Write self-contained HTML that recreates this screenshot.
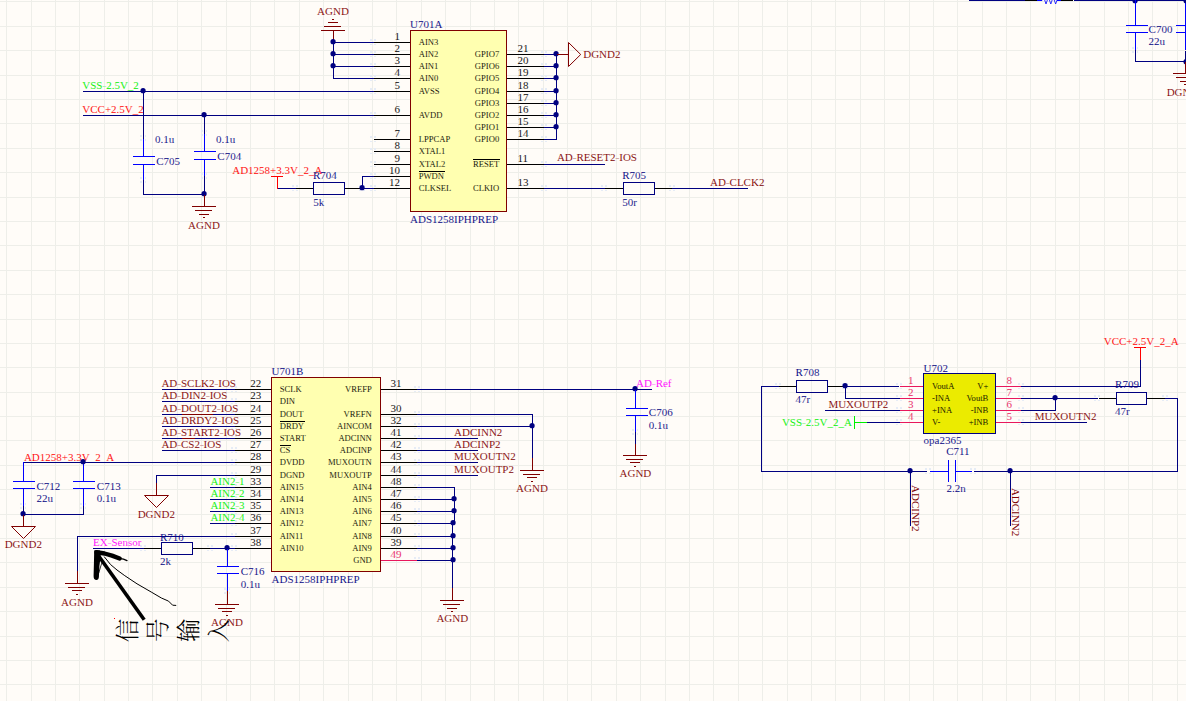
<!DOCTYPE html>
<html lang="zh"><head><meta charset="utf-8"><title>schematic</title>
<style>
html,body{margin:0;padding:0;background:#fff;overflow:hidden}
svg{display:block}
svg rect{shape-rendering:crispEdges}
svg text{font-family:"Liberation Serif","Noto Serif CJK SC",serif;white-space:pre}
</style></head><body>
<svg width="1186" height="708" viewBox="0 0 1186 708">
<rect x="0" y="0" width="1186" height="701" fill="#FFFCF8"/>
<g>
<rect x="6" y="0" width="1" height="701" fill="#EEEEE9"/>
<rect x="31" y="0" width="1" height="701" fill="#EEEEE9"/>
<rect x="55" y="0" width="1" height="701" fill="#EEEEE9"/>
<rect x="79" y="0" width="1" height="701" fill="#EEEEE9"/>
<rect x="104" y="0" width="1" height="701" fill="#EEEEE9"/>
<rect x="128" y="0" width="1" height="701" fill="#EEEEE9"/>
<rect x="152" y="0" width="1" height="701" fill="#EEEEE9"/>
<rect x="177" y="0" width="1" height="701" fill="#EEEEE9"/>
<rect x="201" y="0" width="1" height="701" fill="#EEEEE9"/>
<rect x="226" y="0" width="1" height="701" fill="#EEEEE9"/>
<rect x="250" y="0" width="1" height="701" fill="#EEEEE9"/>
<rect x="274" y="0" width="1" height="701" fill="#EEEEE9"/>
<rect x="299" y="0" width="1" height="701" fill="#EEEEE9"/>
<rect x="323" y="0" width="1" height="701" fill="#EEEEE9"/>
<rect x="348" y="0" width="1" height="701" fill="#EEEEE9"/>
<rect x="372" y="0" width="1" height="701" fill="#EEEEE9"/>
<rect x="396" y="0" width="1" height="701" fill="#EEEEE9"/>
<rect x="421" y="0" width="1" height="701" fill="#EEEEE9"/>
<rect x="445" y="0" width="1" height="701" fill="#EEEEE9"/>
<rect x="470" y="0" width="1" height="701" fill="#EEEEE9"/>
<rect x="494" y="0" width="1" height="701" fill="#EEEEE9"/>
<rect x="518" y="0" width="1" height="701" fill="#EEEEE9"/>
<rect x="543" y="0" width="1" height="701" fill="#EEEEE9"/>
<rect x="567" y="0" width="1" height="701" fill="#EEEEE9"/>
<rect x="591" y="0" width="1" height="701" fill="#EEEEE9"/>
<rect x="616" y="0" width="1" height="701" fill="#EEEEE9"/>
<rect x="640" y="0" width="1" height="701" fill="#EEEEE9"/>
<rect x="665" y="0" width="1" height="701" fill="#EEEEE9"/>
<rect x="689" y="0" width="1" height="701" fill="#EEEEE9"/>
<rect x="713" y="0" width="1" height="701" fill="#EEEEE9"/>
<rect x="738" y="0" width="1" height="701" fill="#EEEEE9"/>
<rect x="762" y="0" width="1" height="701" fill="#EEEEE9"/>
<rect x="787" y="0" width="1" height="701" fill="#EEEEE9"/>
<rect x="811" y="0" width="1" height="701" fill="#EEEEE9"/>
<rect x="835" y="0" width="1" height="701" fill="#EEEEE9"/>
<rect x="860" y="0" width="1" height="701" fill="#EEEEE9"/>
<rect x="884" y="0" width="1" height="701" fill="#EEEEE9"/>
<rect x="909" y="0" width="1" height="701" fill="#EEEEE9"/>
<rect x="933" y="0" width="1" height="701" fill="#EEEEE9"/>
<rect x="957" y="0" width="1" height="701" fill="#EEEEE9"/>
<rect x="982" y="0" width="1" height="701" fill="#EEEEE9"/>
<rect x="1006" y="0" width="1" height="701" fill="#EEEEE9"/>
<rect x="1030" y="0" width="1" height="701" fill="#EEEEE9"/>
<rect x="1055" y="0" width="1" height="701" fill="#EEEEE9"/>
<rect x="1079" y="0" width="1" height="701" fill="#EEEEE9"/>
<rect x="1104" y="0" width="1" height="701" fill="#EEEEE9"/>
<rect x="1128" y="0" width="1" height="701" fill="#EEEEE9"/>
<rect x="1152" y="0" width="1" height="701" fill="#EEEEE9"/>
<rect x="1177" y="0" width="1" height="701" fill="#EEEEE9"/>
<rect x="0" y="1" width="1186" height="1" fill="#EEEEE9"/>
<rect x="0" y="26" width="1186" height="1" fill="#EEEEE9"/>
<rect x="0" y="50" width="1186" height="1" fill="#EEEEE9"/>
<rect x="0" y="75" width="1186" height="1" fill="#EEEEE9"/>
<rect x="0" y="99" width="1186" height="1" fill="#EEEEE9"/>
<rect x="0" y="123" width="1186" height="1" fill="#EEEEE9"/>
<rect x="0" y="148" width="1186" height="1" fill="#EEEEE9"/>
<rect x="0" y="172" width="1186" height="1" fill="#EEEEE9"/>
<rect x="0" y="197" width="1186" height="1" fill="#EEEEE9"/>
<rect x="0" y="221" width="1186" height="1" fill="#EEEEE9"/>
<rect x="0" y="245" width="1186" height="1" fill="#EEEEE9"/>
<rect x="0" y="270" width="1186" height="1" fill="#EEEEE9"/>
<rect x="0" y="294" width="1186" height="1" fill="#EEEEE9"/>
<rect x="0" y="319" width="1186" height="1" fill="#EEEEE9"/>
<rect x="0" y="343" width="1186" height="1" fill="#EEEEE9"/>
<rect x="0" y="367" width="1186" height="1" fill="#EEEEE9"/>
<rect x="0" y="392" width="1186" height="1" fill="#EEEEE9"/>
<rect x="0" y="416" width="1186" height="1" fill="#EEEEE9"/>
<rect x="0" y="440" width="1186" height="1" fill="#EEEEE9"/>
<rect x="0" y="465" width="1186" height="1" fill="#EEEEE9"/>
<rect x="0" y="489" width="1186" height="1" fill="#EEEEE9"/>
<rect x="0" y="514" width="1186" height="1" fill="#EEEEE9"/>
<rect x="0" y="538" width="1186" height="1" fill="#EEEEE9"/>
<rect x="0" y="562" width="1186" height="1" fill="#EEEEE9"/>
<rect x="0" y="587" width="1186" height="1" fill="#EEEEE9"/>
<rect x="0" y="611" width="1186" height="1" fill="#EEEEE9"/>
<rect x="0" y="636" width="1186" height="1" fill="#EEEEE9"/>
<rect x="0" y="660" width="1186" height="1" fill="#EEEEE9"/>
<rect x="0" y="684" width="1186" height="1" fill="#EEEEE9"/>
<rect x="410" y="30" width="97" height="182" fill="#FFFFB0"/>
<rect x="370" y="39" width="2" height="2" fill="#E6ECF6"/>
<rect x="370" y="44" width="2" height="1" fill="#E6ECF6"/>
<rect x="374" y="39" width="2" height="2" fill="#E6ECF6"/>
<rect x="374" y="44" width="2" height="1" fill="#E6ECF6"/>
<rect x="370" y="51" width="2" height="2" fill="#E6ECF6"/>
<rect x="370" y="56" width="2" height="1" fill="#E6ECF6"/>
<rect x="374" y="51" width="2" height="2" fill="#E6ECF6"/>
<rect x="374" y="56" width="2" height="1" fill="#E6ECF6"/>
<rect x="370" y="63" width="2" height="2" fill="#E6ECF6"/>
<rect x="370" y="68" width="2" height="1" fill="#E6ECF6"/>
<rect x="374" y="63" width="2" height="2" fill="#E6ECF6"/>
<rect x="374" y="68" width="2" height="1" fill="#E6ECF6"/>
<rect x="370" y="75" width="2" height="2" fill="#E6ECF6"/>
<rect x="370" y="80" width="2" height="1" fill="#E6ECF6"/>
<rect x="374" y="75" width="2" height="2" fill="#E6ECF6"/>
<rect x="374" y="80" width="2" height="1" fill="#E6ECF6"/>
<rect x="370" y="88" width="2" height="2" fill="#E6ECF6"/>
<rect x="370" y="93" width="2" height="1" fill="#E6ECF6"/>
<rect x="374" y="88" width="2" height="2" fill="#E6ECF6"/>
<rect x="374" y="93" width="2" height="1" fill="#E6ECF6"/>
<rect x="370" y="112" width="2" height="2" fill="#E6ECF6"/>
<rect x="370" y="117" width="2" height="1" fill="#E6ECF6"/>
<rect x="374" y="112" width="2" height="2" fill="#E6ECF6"/>
<rect x="374" y="117" width="2" height="1" fill="#E6ECF6"/>
<rect x="370" y="136" width="2" height="2" fill="#E6ECF6"/>
<rect x="370" y="141" width="2" height="1" fill="#E6ECF6"/>
<rect x="374" y="136" width="2" height="2" fill="#E6ECF6"/>
<rect x="374" y="141" width="2" height="1" fill="#E6ECF6"/>
<rect x="370" y="148" width="2" height="2" fill="#E6ECF6"/>
<rect x="370" y="153" width="2" height="1" fill="#E6ECF6"/>
<rect x="374" y="148" width="2" height="2" fill="#E6ECF6"/>
<rect x="374" y="153" width="2" height="1" fill="#E6ECF6"/>
<rect x="370" y="161" width="2" height="2" fill="#E6ECF6"/>
<rect x="370" y="166" width="2" height="1" fill="#E6ECF6"/>
<rect x="374" y="161" width="2" height="2" fill="#E6ECF6"/>
<rect x="374" y="166" width="2" height="1" fill="#E6ECF6"/>
<rect x="370" y="173" width="2" height="2" fill="#E6ECF6"/>
<rect x="370" y="178" width="2" height="1" fill="#E6ECF6"/>
<rect x="374" y="173" width="2" height="2" fill="#E6ECF6"/>
<rect x="374" y="178" width="2" height="1" fill="#E6ECF6"/>
<rect x="370" y="185" width="2" height="2" fill="#E6ECF6"/>
<rect x="370" y="190" width="2" height="1" fill="#E6ECF6"/>
<rect x="374" y="185" width="2" height="2" fill="#E6ECF6"/>
<rect x="374" y="190" width="2" height="1" fill="#E6ECF6"/>
<rect x="541" y="51" width="2" height="2" fill="#E6ECF6"/>
<rect x="541" y="56" width="2" height="1" fill="#E6ECF6"/>
<rect x="545" y="51" width="2" height="2" fill="#E6ECF6"/>
<rect x="545" y="56" width="2" height="1" fill="#E6ECF6"/>
<rect x="541" y="63" width="2" height="2" fill="#E6ECF6"/>
<rect x="541" y="68" width="2" height="1" fill="#E6ECF6"/>
<rect x="545" y="63" width="2" height="2" fill="#E6ECF6"/>
<rect x="545" y="68" width="2" height="1" fill="#E6ECF6"/>
<rect x="541" y="75" width="2" height="2" fill="#E6ECF6"/>
<rect x="541" y="80" width="2" height="1" fill="#E6ECF6"/>
<rect x="545" y="75" width="2" height="2" fill="#E6ECF6"/>
<rect x="545" y="80" width="2" height="1" fill="#E6ECF6"/>
<rect x="541" y="88" width="2" height="2" fill="#E6ECF6"/>
<rect x="541" y="93" width="2" height="1" fill="#E6ECF6"/>
<rect x="545" y="88" width="2" height="2" fill="#E6ECF6"/>
<rect x="545" y="93" width="2" height="1" fill="#E6ECF6"/>
<rect x="541" y="100" width="2" height="2" fill="#E6ECF6"/>
<rect x="541" y="105" width="2" height="1" fill="#E6ECF6"/>
<rect x="545" y="100" width="2" height="2" fill="#E6ECF6"/>
<rect x="545" y="105" width="2" height="1" fill="#E6ECF6"/>
<rect x="541" y="112" width="2" height="2" fill="#E6ECF6"/>
<rect x="541" y="117" width="2" height="1" fill="#E6ECF6"/>
<rect x="545" y="112" width="2" height="2" fill="#E6ECF6"/>
<rect x="545" y="117" width="2" height="1" fill="#E6ECF6"/>
<rect x="541" y="124" width="2" height="2" fill="#E6ECF6"/>
<rect x="541" y="129" width="2" height="1" fill="#E6ECF6"/>
<rect x="545" y="124" width="2" height="2" fill="#E6ECF6"/>
<rect x="545" y="129" width="2" height="1" fill="#E6ECF6"/>
<rect x="541" y="136" width="2" height="2" fill="#E6ECF6"/>
<rect x="541" y="141" width="2" height="1" fill="#E6ECF6"/>
<rect x="545" y="136" width="2" height="2" fill="#E6ECF6"/>
<rect x="545" y="141" width="2" height="1" fill="#E6ECF6"/>
<rect x="541" y="161" width="2" height="2" fill="#E6ECF6"/>
<rect x="541" y="166" width="2" height="1" fill="#E6ECF6"/>
<rect x="545" y="161" width="2" height="2" fill="#E6ECF6"/>
<rect x="545" y="166" width="2" height="1" fill="#E6ECF6"/>
<rect x="541" y="185" width="2" height="2" fill="#E6ECF6"/>
<rect x="541" y="190" width="2" height="1" fill="#E6ECF6"/>
<rect x="545" y="185" width="2" height="2" fill="#E6ECF6"/>
<rect x="545" y="190" width="2" height="1" fill="#E6ECF6"/>
<rect x="271" y="377" width="110" height="195" fill="#FFFFB0"/>
<rect x="231" y="386" width="2" height="2" fill="#E6ECF6"/>
<rect x="231" y="391" width="2" height="1" fill="#E6ECF6"/>
<rect x="235" y="386" width="2" height="2" fill="#E6ECF6"/>
<rect x="235" y="391" width="2" height="1" fill="#E6ECF6"/>
<rect x="231" y="398" width="2" height="2" fill="#E6ECF6"/>
<rect x="231" y="403" width="2" height="1" fill="#E6ECF6"/>
<rect x="235" y="398" width="2" height="2" fill="#E6ECF6"/>
<rect x="235" y="403" width="2" height="1" fill="#E6ECF6"/>
<rect x="231" y="411" width="2" height="2" fill="#E6ECF6"/>
<rect x="231" y="416" width="2" height="1" fill="#E6ECF6"/>
<rect x="235" y="411" width="2" height="2" fill="#E6ECF6"/>
<rect x="235" y="416" width="2" height="1" fill="#E6ECF6"/>
<rect x="231" y="423" width="2" height="2" fill="#E6ECF6"/>
<rect x="231" y="428" width="2" height="1" fill="#E6ECF6"/>
<rect x="235" y="423" width="2" height="2" fill="#E6ECF6"/>
<rect x="235" y="428" width="2" height="1" fill="#E6ECF6"/>
<rect x="231" y="435" width="2" height="2" fill="#E6ECF6"/>
<rect x="231" y="440" width="2" height="1" fill="#E6ECF6"/>
<rect x="235" y="435" width="2" height="2" fill="#E6ECF6"/>
<rect x="235" y="440" width="2" height="1" fill="#E6ECF6"/>
<rect x="231" y="447" width="2" height="2" fill="#E6ECF6"/>
<rect x="231" y="452" width="2" height="1" fill="#E6ECF6"/>
<rect x="235" y="447" width="2" height="2" fill="#E6ECF6"/>
<rect x="235" y="452" width="2" height="1" fill="#E6ECF6"/>
<rect x="231" y="459" width="2" height="2" fill="#E6ECF6"/>
<rect x="231" y="464" width="2" height="1" fill="#E6ECF6"/>
<rect x="235" y="459" width="2" height="2" fill="#E6ECF6"/>
<rect x="235" y="464" width="2" height="1" fill="#E6ECF6"/>
<rect x="231" y="472" width="2" height="2" fill="#E6ECF6"/>
<rect x="231" y="477" width="2" height="1" fill="#E6ECF6"/>
<rect x="235" y="472" width="2" height="2" fill="#E6ECF6"/>
<rect x="235" y="477" width="2" height="1" fill="#E6ECF6"/>
<rect x="231" y="484" width="2" height="2" fill="#E6ECF6"/>
<rect x="231" y="489" width="2" height="1" fill="#E6ECF6"/>
<rect x="235" y="484" width="2" height="2" fill="#E6ECF6"/>
<rect x="235" y="489" width="2" height="1" fill="#E6ECF6"/>
<rect x="231" y="496" width="2" height="2" fill="#E6ECF6"/>
<rect x="231" y="501" width="2" height="1" fill="#E6ECF6"/>
<rect x="235" y="496" width="2" height="2" fill="#E6ECF6"/>
<rect x="235" y="501" width="2" height="1" fill="#E6ECF6"/>
<rect x="231" y="508" width="2" height="2" fill="#E6ECF6"/>
<rect x="231" y="513" width="2" height="1" fill="#E6ECF6"/>
<rect x="235" y="508" width="2" height="2" fill="#E6ECF6"/>
<rect x="235" y="513" width="2" height="1" fill="#E6ECF6"/>
<rect x="231" y="520" width="2" height="2" fill="#E6ECF6"/>
<rect x="231" y="525" width="2" height="1" fill="#E6ECF6"/>
<rect x="235" y="520" width="2" height="2" fill="#E6ECF6"/>
<rect x="235" y="525" width="2" height="1" fill="#E6ECF6"/>
<rect x="231" y="533" width="2" height="2" fill="#E6ECF6"/>
<rect x="231" y="538" width="2" height="1" fill="#E6ECF6"/>
<rect x="235" y="533" width="2" height="2" fill="#E6ECF6"/>
<rect x="235" y="538" width="2" height="1" fill="#E6ECF6"/>
<rect x="231" y="545" width="2" height="2" fill="#E6ECF6"/>
<rect x="231" y="550" width="2" height="1" fill="#E6ECF6"/>
<rect x="235" y="545" width="2" height="2" fill="#E6ECF6"/>
<rect x="235" y="550" width="2" height="1" fill="#E6ECF6"/>
<rect x="414" y="386" width="2" height="2" fill="#E6ECF6"/>
<rect x="414" y="391" width="2" height="1" fill="#E6ECF6"/>
<rect x="418" y="386" width="2" height="2" fill="#E6ECF6"/>
<rect x="418" y="391" width="2" height="1" fill="#E6ECF6"/>
<rect x="414" y="411" width="2" height="2" fill="#E6ECF6"/>
<rect x="414" y="416" width="2" height="1" fill="#E6ECF6"/>
<rect x="418" y="411" width="2" height="2" fill="#E6ECF6"/>
<rect x="418" y="416" width="2" height="1" fill="#E6ECF6"/>
<rect x="414" y="423" width="2" height="2" fill="#E6ECF6"/>
<rect x="414" y="428" width="2" height="1" fill="#E6ECF6"/>
<rect x="418" y="423" width="2" height="2" fill="#E6ECF6"/>
<rect x="418" y="428" width="2" height="1" fill="#E6ECF6"/>
<rect x="414" y="435" width="2" height="2" fill="#E6ECF6"/>
<rect x="414" y="440" width="2" height="1" fill="#E6ECF6"/>
<rect x="418" y="435" width="2" height="2" fill="#E6ECF6"/>
<rect x="418" y="440" width="2" height="1" fill="#E6ECF6"/>
<rect x="414" y="447" width="2" height="2" fill="#E6ECF6"/>
<rect x="414" y="452" width="2" height="1" fill="#E6ECF6"/>
<rect x="418" y="447" width="2" height="2" fill="#E6ECF6"/>
<rect x="418" y="452" width="2" height="1" fill="#E6ECF6"/>
<rect x="414" y="459" width="2" height="2" fill="#E6ECF6"/>
<rect x="414" y="464" width="2" height="1" fill="#E6ECF6"/>
<rect x="418" y="459" width="2" height="2" fill="#E6ECF6"/>
<rect x="418" y="464" width="2" height="1" fill="#E6ECF6"/>
<rect x="414" y="472" width="2" height="2" fill="#E6ECF6"/>
<rect x="414" y="477" width="2" height="1" fill="#E6ECF6"/>
<rect x="418" y="472" width="2" height="2" fill="#E6ECF6"/>
<rect x="418" y="477" width="2" height="1" fill="#E6ECF6"/>
<rect x="414" y="484" width="2" height="2" fill="#E6ECF6"/>
<rect x="414" y="489" width="2" height="1" fill="#E6ECF6"/>
<rect x="418" y="484" width="2" height="2" fill="#E6ECF6"/>
<rect x="418" y="489" width="2" height="1" fill="#E6ECF6"/>
<rect x="414" y="496" width="2" height="2" fill="#E6ECF6"/>
<rect x="414" y="501" width="2" height="1" fill="#E6ECF6"/>
<rect x="418" y="496" width="2" height="2" fill="#E6ECF6"/>
<rect x="418" y="501" width="2" height="1" fill="#E6ECF6"/>
<rect x="414" y="508" width="2" height="2" fill="#E6ECF6"/>
<rect x="414" y="513" width="2" height="1" fill="#E6ECF6"/>
<rect x="418" y="508" width="2" height="2" fill="#E6ECF6"/>
<rect x="418" y="513" width="2" height="1" fill="#E6ECF6"/>
<rect x="414" y="520" width="2" height="2" fill="#E6ECF6"/>
<rect x="414" y="525" width="2" height="1" fill="#E6ECF6"/>
<rect x="418" y="520" width="2" height="2" fill="#E6ECF6"/>
<rect x="418" y="525" width="2" height="1" fill="#E6ECF6"/>
<rect x="414" y="533" width="2" height="2" fill="#E6ECF6"/>
<rect x="414" y="538" width="2" height="1" fill="#E6ECF6"/>
<rect x="418" y="533" width="2" height="2" fill="#E6ECF6"/>
<rect x="418" y="538" width="2" height="1" fill="#E6ECF6"/>
<rect x="414" y="545" width="2" height="2" fill="#E6ECF6"/>
<rect x="414" y="550" width="2" height="1" fill="#E6ECF6"/>
<rect x="418" y="545" width="2" height="2" fill="#E6ECF6"/>
<rect x="418" y="550" width="2" height="1" fill="#E6ECF6"/>
<rect x="414" y="557" width="2" height="2" fill="#E6ECF6"/>
<rect x="414" y="562" width="2" height="1" fill="#E6ECF6"/>
<rect x="418" y="557" width="2" height="2" fill="#E6ECF6"/>
<rect x="418" y="562" width="2" height="1" fill="#E6ECF6"/>
<rect x="896" y="383" width="2" height="2" fill="#E6ECF6"/>
<rect x="896" y="388" width="2" height="1" fill="#E6ECF6"/>
<rect x="900" y="383" width="2" height="2" fill="#E6ECF6"/>
<rect x="900" y="388" width="2" height="1" fill="#E6ECF6"/>
<rect x="1018" y="383" width="2" height="2" fill="#E6ECF6"/>
<rect x="1018" y="388" width="2" height="1" fill="#E6ECF6"/>
<rect x="1022" y="383" width="2" height="2" fill="#E6ECF6"/>
<rect x="1022" y="388" width="2" height="1" fill="#E6ECF6"/>
<rect x="896" y="395" width="2" height="2" fill="#E6ECF6"/>
<rect x="896" y="400" width="2" height="1" fill="#E6ECF6"/>
<rect x="900" y="395" width="2" height="2" fill="#E6ECF6"/>
<rect x="900" y="400" width="2" height="1" fill="#E6ECF6"/>
<rect x="1018" y="395" width="2" height="2" fill="#E6ECF6"/>
<rect x="1018" y="400" width="2" height="1" fill="#E6ECF6"/>
<rect x="1022" y="395" width="2" height="2" fill="#E6ECF6"/>
<rect x="1022" y="400" width="2" height="1" fill="#E6ECF6"/>
<rect x="896" y="407" width="2" height="2" fill="#E6ECF6"/>
<rect x="896" y="412" width="2" height="1" fill="#E6ECF6"/>
<rect x="900" y="407" width="2" height="2" fill="#E6ECF6"/>
<rect x="900" y="412" width="2" height="1" fill="#E6ECF6"/>
<rect x="1018" y="407" width="2" height="2" fill="#E6ECF6"/>
<rect x="1018" y="412" width="2" height="1" fill="#E6ECF6"/>
<rect x="1022" y="407" width="2" height="2" fill="#E6ECF6"/>
<rect x="1022" y="412" width="2" height="1" fill="#E6ECF6"/>
<rect x="896" y="419" width="2" height="2" fill="#E6ECF6"/>
<rect x="896" y="424" width="2" height="1" fill="#E6ECF6"/>
<rect x="900" y="419" width="2" height="2" fill="#E6ECF6"/>
<rect x="900" y="424" width="2" height="1" fill="#E6ECF6"/>
<rect x="1018" y="419" width="2" height="2" fill="#E6ECF6"/>
<rect x="1018" y="424" width="2" height="1" fill="#E6ECF6"/>
<rect x="1022" y="419" width="2" height="2" fill="#E6ECF6"/>
<rect x="1022" y="424" width="2" height="1" fill="#E6ECF6"/>
<rect x="923" y="373" width="73" height="61" fill="#EBEB00"/>
<rect x="292" y="185" width="2" height="2" fill="#E6ECF6"/>
<rect x="292" y="190" width="2" height="1" fill="#E6ECF6"/>
<rect x="296" y="185" width="2" height="2" fill="#E6ECF6"/>
<rect x="296" y="190" width="2" height="1" fill="#E6ECF6"/>
<rect x="359" y="185" width="2" height="2" fill="#E6ECF6"/>
<rect x="359" y="190" width="2" height="1" fill="#E6ECF6"/>
<rect x="363" y="185" width="2" height="2" fill="#E6ECF6"/>
<rect x="363" y="190" width="2" height="1" fill="#E6ECF6"/>
<rect x="601" y="185" width="2" height="2" fill="#E6ECF6"/>
<rect x="601" y="190" width="2" height="1" fill="#E6ECF6"/>
<rect x="605" y="185" width="2" height="2" fill="#E6ECF6"/>
<rect x="605" y="190" width="2" height="1" fill="#E6ECF6"/>
<rect x="669" y="185" width="2" height="2" fill="#E6ECF6"/>
<rect x="669" y="190" width="2" height="1" fill="#E6ECF6"/>
<rect x="673" y="185" width="2" height="2" fill="#E6ECF6"/>
<rect x="673" y="190" width="2" height="1" fill="#E6ECF6"/>
<rect x="140" y="545" width="2" height="2" fill="#E6ECF6"/>
<rect x="140" y="550" width="2" height="1" fill="#E6ECF6"/>
<rect x="144" y="545" width="2" height="2" fill="#E6ECF6"/>
<rect x="144" y="550" width="2" height="1" fill="#E6ECF6"/>
<rect x="207" y="545" width="2" height="2" fill="#E6ECF6"/>
<rect x="207" y="550" width="2" height="1" fill="#E6ECF6"/>
<rect x="211" y="545" width="2" height="2" fill="#E6ECF6"/>
<rect x="211" y="550" width="2" height="1" fill="#E6ECF6"/>
<rect x="775" y="383" width="2" height="2" fill="#E6ECF6"/>
<rect x="775" y="388" width="2" height="1" fill="#E6ECF6"/>
<rect x="779" y="383" width="2" height="2" fill="#E6ECF6"/>
<rect x="779" y="388" width="2" height="1" fill="#E6ECF6"/>
<rect x="842" y="383" width="2" height="2" fill="#E6ECF6"/>
<rect x="842" y="388" width="2" height="1" fill="#E6ECF6"/>
<rect x="846" y="383" width="2" height="2" fill="#E6ECF6"/>
<rect x="846" y="388" width="2" height="1" fill="#E6ECF6"/>
<rect x="1094" y="395" width="2" height="2" fill="#E6ECF6"/>
<rect x="1094" y="400" width="2" height="1" fill="#E6ECF6"/>
<rect x="1098" y="395" width="2" height="2" fill="#E6ECF6"/>
<rect x="1098" y="400" width="2" height="1" fill="#E6ECF6"/>
<rect x="1162" y="395" width="2" height="2" fill="#E6ECF6"/>
<rect x="1162" y="400" width="2" height="1" fill="#E6ECF6"/>
<rect x="1166" y="395" width="2" height="2" fill="#E6ECF6"/>
<rect x="1166" y="400" width="2" height="1" fill="#E6ECF6"/>
<rect x="925" y="468" width="2" height="2" fill="#E6ECF6"/>
<rect x="925" y="473" width="2" height="1" fill="#E6ECF6"/>
<rect x="929" y="468" width="2" height="2" fill="#E6ECF6"/>
<rect x="929" y="473" width="2" height="1" fill="#E6ECF6"/>
<rect x="970" y="468" width="2" height="2" fill="#E6ECF6"/>
<rect x="970" y="473" width="2" height="1" fill="#E6ECF6"/>
<rect x="974" y="468" width="2" height="2" fill="#E6ECF6"/>
<rect x="974" y="473" width="2" height="1" fill="#E6ECF6"/>
<rect x="140" y="135" width="2" height="2" fill="#E6ECF6"/>
<rect x="145" y="135" width="1" height="2" fill="#E6ECF6"/>
<rect x="140" y="139" width="2" height="2" fill="#E6ECF6"/>
<rect x="145" y="139" width="1" height="2" fill="#E6ECF6"/>
<rect x="140" y="177" width="2" height="2" fill="#E6ECF6"/>
<rect x="145" y="177" width="1" height="2" fill="#E6ECF6"/>
<rect x="140" y="181" width="2" height="2" fill="#E6ECF6"/>
<rect x="145" y="181" width="1" height="2" fill="#E6ECF6"/>
<rect x="201" y="130" width="2" height="2" fill="#E6ECF6"/>
<rect x="206" y="130" width="1" height="2" fill="#E6ECF6"/>
<rect x="201" y="134" width="2" height="2" fill="#E6ECF6"/>
<rect x="206" y="134" width="1" height="2" fill="#E6ECF6"/>
<rect x="201" y="173" width="2" height="2" fill="#E6ECF6"/>
<rect x="206" y="173" width="1" height="2" fill="#E6ECF6"/>
<rect x="201" y="177" width="2" height="2" fill="#E6ECF6"/>
<rect x="206" y="177" width="1" height="2" fill="#E6ECF6"/>
<rect x="20" y="503" width="2" height="2" fill="#E6ECF6"/>
<rect x="25" y="503" width="1" height="2" fill="#E6ECF6"/>
<rect x="20" y="507" width="2" height="2" fill="#E6ECF6"/>
<rect x="25" y="507" width="1" height="2" fill="#E6ECF6"/>
<rect x="80" y="503" width="2" height="2" fill="#E6ECF6"/>
<rect x="85" y="503" width="1" height="2" fill="#E6ECF6"/>
<rect x="80" y="507" width="2" height="2" fill="#E6ECF6"/>
<rect x="85" y="507" width="1" height="2" fill="#E6ECF6"/>
<rect x="224" y="588" width="2" height="2" fill="#E6ECF6"/>
<rect x="229" y="588" width="1" height="2" fill="#E6ECF6"/>
<rect x="224" y="592" width="2" height="2" fill="#E6ECF6"/>
<rect x="229" y="592" width="1" height="2" fill="#E6ECF6"/>
<rect x="632" y="429" width="2" height="2" fill="#E6ECF6"/>
<rect x="637" y="429" width="1" height="2" fill="#E6ECF6"/>
<rect x="632" y="433" width="2" height="2" fill="#E6ECF6"/>
<rect x="637" y="433" width="1" height="2" fill="#E6ECF6"/>
<rect x="1132" y="47" width="2" height="2" fill="#E6ECF6"/>
<rect x="1137" y="47" width="1" height="2" fill="#E6ECF6"/>
<rect x="1132" y="51" width="2" height="2" fill="#E6ECF6"/>
<rect x="1137" y="51" width="1" height="2" fill="#E6ECF6"/>
<text x="1148.6" y="33.4" font-size="11" fill="#000080" stroke="#FFFCF8" stroke-width="0.08">C700</text>
<text x="1148.6" y="45.3" font-size="11" fill="#000080" stroke="#FFFCF8" stroke-width="0.08">22u</text>
<text x="1185.3" y="95.6" font-size="11" fill="#800000" text-anchor="middle" stroke="#FFFCF8" stroke-width="0.08">DGND2</text>
<text x="410" y="27.6" font-size="11" fill="#000080" stroke="#FFFCF8" stroke-width="0.08">U701A</text>
<text x="410" y="223.0" font-size="11" fill="#000080" stroke="#FFFCF8" stroke-width="0.08">ADS1258IPHPREP</text>
<text x="400" y="40" font-size="11" fill="#000000" text-anchor="end" stroke="#FFFCF8" stroke-width="0.08">1</text>
<text x="418.7" y="45.3" font-size="8.6" fill="#000000" stroke="#FFFFB0" stroke-width="0.08">AIN3</text>
<text x="400" y="52" font-size="11" fill="#000000" text-anchor="end" stroke="#FFFCF8" stroke-width="0.08">2</text>
<text x="418.7" y="57.3" font-size="8.6" fill="#000000" stroke="#FFFFB0" stroke-width="0.08">AIN2</text>
<text x="400" y="64" font-size="11" fill="#000000" text-anchor="end" stroke="#FFFCF8" stroke-width="0.08">3</text>
<text x="418.7" y="69.3" font-size="8.6" fill="#000000" stroke="#FFFFB0" stroke-width="0.08">AIN1</text>
<text x="400" y="76" font-size="11" fill="#000000" text-anchor="end" stroke="#FFFCF8" stroke-width="0.08">4</text>
<text x="418.7" y="81.3" font-size="8.6" fill="#000000" stroke="#FFFFB0" stroke-width="0.08">AIN0</text>
<text x="400" y="89" font-size="11" fill="#000000" text-anchor="end" stroke="#FFFCF8" stroke-width="0.08">5</text>
<text x="418.7" y="94.3" font-size="8.6" fill="#000000" stroke="#FFFFB0" stroke-width="0.08">AVSS</text>
<text x="400" y="113" font-size="11" fill="#000000" text-anchor="end" stroke="#FFFCF8" stroke-width="0.08">6</text>
<text x="418.7" y="118.3" font-size="8.6" fill="#000000" stroke="#FFFFB0" stroke-width="0.08">AVDD</text>
<text x="400" y="137" font-size="11" fill="#000000" text-anchor="end" stroke="#FFFCF8" stroke-width="0.08">7</text>
<text x="418.7" y="142.3" font-size="8.6" fill="#000000" stroke="#FFFFB0" stroke-width="0.08">LPPCAP</text>
<text x="400" y="149" font-size="11" fill="#000000" text-anchor="end" stroke="#FFFCF8" stroke-width="0.08">8</text>
<text x="418.7" y="154.3" font-size="8.6" fill="#000000" stroke="#FFFFB0" stroke-width="0.08">XTAL1</text>
<text x="400" y="162" font-size="11" fill="#000000" text-anchor="end" stroke="#FFFCF8" stroke-width="0.08">9</text>
<text x="418.7" y="167.3" font-size="8.6" fill="#000000" stroke="#FFFFB0" stroke-width="0.08">XTAL2</text>
<text x="400" y="174" font-size="11" fill="#000000" text-anchor="end" stroke="#FFFCF8" stroke-width="0.08">10</text>
<text x="418.7" y="179.3" font-size="8.6" fill="#000000" stroke="#FFFFB0" stroke-width="0.08">PWDN</text>
<text x="400" y="186" font-size="11" fill="#000000" text-anchor="end" stroke="#FFFCF8" stroke-width="0.08">12</text>
<text x="418.7" y="191.3" font-size="8.6" fill="#000000" stroke="#FFFFB0" stroke-width="0.08">CLKSEL</text>
<text x="517.4" y="52" font-size="11" fill="#000000" stroke="#FFFCF8" stroke-width="0.08">21</text>
<text x="499.2" y="57.3" font-size="8.6" fill="#000000" text-anchor="end" stroke="#FFFFB0" stroke-width="0.08">GPIO7</text>
<text x="517.4" y="64" font-size="11" fill="#000000" stroke="#FFFCF8" stroke-width="0.08">20</text>
<text x="499.2" y="69.3" font-size="8.6" fill="#000000" text-anchor="end" stroke="#FFFFB0" stroke-width="0.08">GPIO6</text>
<text x="517.4" y="76" font-size="11" fill="#000000" stroke="#FFFCF8" stroke-width="0.08">19</text>
<text x="499.2" y="81.3" font-size="8.6" fill="#000000" text-anchor="end" stroke="#FFFFB0" stroke-width="0.08">GPIO5</text>
<text x="517.4" y="89" font-size="11" fill="#000000" stroke="#FFFCF8" stroke-width="0.08">18</text>
<text x="499.2" y="94.3" font-size="8.6" fill="#000000" text-anchor="end" stroke="#FFFFB0" stroke-width="0.08">GPIO4</text>
<text x="517.4" y="101" font-size="11" fill="#000000" stroke="#FFFCF8" stroke-width="0.08">17</text>
<text x="499.2" y="106.3" font-size="8.6" fill="#000000" text-anchor="end" stroke="#FFFFB0" stroke-width="0.08">GPIO3</text>
<text x="517.4" y="113" font-size="11" fill="#000000" stroke="#FFFCF8" stroke-width="0.08">16</text>
<text x="499.2" y="118.3" font-size="8.6" fill="#000000" text-anchor="end" stroke="#FFFFB0" stroke-width="0.08">GPIO2</text>
<text x="517.4" y="125" font-size="11" fill="#000000" stroke="#FFFCF8" stroke-width="0.08">15</text>
<text x="499.2" y="130.3" font-size="8.6" fill="#000000" text-anchor="end" stroke="#FFFFB0" stroke-width="0.08">GPIO1</text>
<text x="517.4" y="137" font-size="11" fill="#000000" stroke="#FFFCF8" stroke-width="0.08">14</text>
<text x="499.2" y="142.3" font-size="8.6" fill="#000000" text-anchor="end" stroke="#FFFFB0" stroke-width="0.08">GPIO0</text>
<text x="517.4" y="162" font-size="11" fill="#000000" stroke="#FFFCF8" stroke-width="0.08">11</text>
<text x="499.2" y="167.3" font-size="8.6" fill="#000000" text-anchor="end" stroke="#FFFFB0" stroke-width="0.08">RESET</text>
<text x="517.4" y="186" font-size="11" fill="#000000" stroke="#FFFCF8" stroke-width="0.08">13</text>
<text x="499.2" y="191.3" font-size="8.6" fill="#000000" text-anchor="end" stroke="#FFFFB0" stroke-width="0.08">CLKIO</text>
<text x="333" y="15.3" font-size="11" fill="#800000" text-anchor="middle" stroke="#FFFCF8" stroke-width="0.08">AGND</text>
<text x="82.3" y="88.6" font-size="11" fill="#00F000" stroke="#FFFCF8" stroke-width="0.08">VSS-2.5V_2</text>
<text x="82.3" y="112.9" font-size="11" fill="#FF0000" stroke="#FFFCF8" stroke-width="0.08">VCC+2.5V_2</text>
<text x="155.1" y="143.3" font-size="11" fill="#000080" stroke="#FFFCF8" stroke-width="0.08">0.1u</text>
<text x="156.2" y="165.1" font-size="11" fill="#000080" stroke="#FFFCF8" stroke-width="0.08">C705</text>
<text x="215.9" y="143.3" font-size="11" fill="#000080" stroke="#FFFCF8" stroke-width="0.08">0.1u</text>
<text x="217.3" y="160" font-size="11" fill="#000080" stroke="#FFFCF8" stroke-width="0.08">C704</text>
<text x="204" y="228.8" font-size="11" fill="#800000" text-anchor="middle" stroke="#FFFCF8" stroke-width="0.08">AGND</text>
<text x="232.2" y="173.9" font-size="11" fill="#FF0000" stroke="#FFFCF8" stroke-width="0.08">AD1258+3.3V_2_A</text>
<text x="312.9" y="178.8" font-size="11" fill="#000080" stroke="#FFFCF8" stroke-width="0.08">R704</text>
<text x="313.2" y="205.6" font-size="11" fill="#000080" stroke="#FFFCF8" stroke-width="0.08">5k</text>
<text x="583.2" y="57.9" font-size="11" fill="#800000" stroke="#FFFCF8" stroke-width="0.08">DGND2</text>
<text x="556.9" y="161.4" font-size="11" fill="#800000" stroke="#FFFCF8" stroke-width="0.08">AD-RESET2-IOS</text>
<text x="622.2" y="178.6" font-size="11" fill="#000080" stroke="#FFFCF8" stroke-width="0.08">R705</text>
<text x="622.2" y="205.6" font-size="11" fill="#000080" stroke="#FFFCF8" stroke-width="0.08">50r</text>
<text x="710" y="186" font-size="11" fill="#800000" stroke="#FFFCF8" stroke-width="0.08">AD-CLCK2</text>
<text x="271.6" y="374.8" font-size="11" fill="#000080" stroke="#FFFCF8" stroke-width="0.08">U701B</text>
<text x="271.6" y="582.7" font-size="11" fill="#000080" stroke="#FFFCF8" stroke-width="0.08">ADS1258IPHPREP</text>
<text x="261.2" y="387" font-size="11" fill="#000000" text-anchor="end" stroke="#FFFCF8" stroke-width="0.08">22</text>
<text x="279.7" y="392.3" font-size="8.6" fill="#000000" stroke="#FFFFB0" stroke-width="0.08">SCLK</text>
<text x="261.2" y="399" font-size="11" fill="#000000" text-anchor="end" stroke="#FFFCF8" stroke-width="0.08">23</text>
<text x="279.7" y="404.3" font-size="8.6" fill="#000000" stroke="#FFFFB0" stroke-width="0.08">DIN</text>
<text x="261.2" y="412" font-size="11" fill="#000000" text-anchor="end" stroke="#FFFCF8" stroke-width="0.08">24</text>
<text x="279.7" y="417.3" font-size="8.6" fill="#000000" stroke="#FFFFB0" stroke-width="0.08">DOUT</text>
<text x="261.2" y="424" font-size="11" fill="#000000" text-anchor="end" stroke="#FFFCF8" stroke-width="0.08">25</text>
<text x="279.7" y="429.3" font-size="8.6" fill="#000000" stroke="#FFFFB0" stroke-width="0.08">DRDY</text>
<text x="261.2" y="436" font-size="11" fill="#000000" text-anchor="end" stroke="#FFFCF8" stroke-width="0.08">26</text>
<text x="279.7" y="441.3" font-size="8.6" fill="#000000" stroke="#FFFFB0" stroke-width="0.08">START</text>
<text x="261.2" y="448" font-size="11" fill="#000000" text-anchor="end" stroke="#FFFCF8" stroke-width="0.08">27</text>
<text x="279.7" y="453.3" font-size="8.6" fill="#000000" stroke="#FFFFB0" stroke-width="0.08">CS</text>
<text x="261.2" y="460" font-size="11" fill="#000000" text-anchor="end" stroke="#FFFCF8" stroke-width="0.08">28</text>
<text x="279.7" y="465.3" font-size="8.6" fill="#000000" stroke="#FFFFB0" stroke-width="0.08">DVDD</text>
<text x="261.2" y="473" font-size="11" fill="#000000" text-anchor="end" stroke="#FFFCF8" stroke-width="0.08">29</text>
<text x="279.7" y="478.3" font-size="8.6" fill="#000000" stroke="#FFFFB0" stroke-width="0.08">DGND</text>
<text x="261.2" y="485" font-size="11" fill="#000000" text-anchor="end" stroke="#FFFCF8" stroke-width="0.08">33</text>
<text x="279.7" y="490.3" font-size="8.6" fill="#000000" stroke="#FFFFB0" stroke-width="0.08">AIN15</text>
<text x="261.2" y="497" font-size="11" fill="#000000" text-anchor="end" stroke="#FFFCF8" stroke-width="0.08">34</text>
<text x="279.7" y="502.3" font-size="8.6" fill="#000000" stroke="#FFFFB0" stroke-width="0.08">AIN14</text>
<text x="261.2" y="509" font-size="11" fill="#000000" text-anchor="end" stroke="#FFFCF8" stroke-width="0.08">35</text>
<text x="279.7" y="514.3" font-size="8.6" fill="#000000" stroke="#FFFFB0" stroke-width="0.08">AIN13</text>
<text x="261.2" y="521" font-size="11" fill="#000000" text-anchor="end" stroke="#FFFCF8" stroke-width="0.08">36</text>
<text x="279.7" y="526.3" font-size="8.6" fill="#000000" stroke="#FFFFB0" stroke-width="0.08">AIN12</text>
<text x="261.2" y="534" font-size="11" fill="#000000" text-anchor="end" stroke="#FFFCF8" stroke-width="0.08">37</text>
<text x="279.7" y="539.3" font-size="8.6" fill="#000000" stroke="#FFFFB0" stroke-width="0.08">AIN11</text>
<text x="261.2" y="546" font-size="11" fill="#000000" text-anchor="end" stroke="#FFFCF8" stroke-width="0.08">38</text>
<text x="279.7" y="551.3" font-size="8.6" fill="#000000" stroke="#FFFFB0" stroke-width="0.08">AIN10</text>
<text x="390.4" y="387" font-size="11" fill="#000000" stroke="#FFFCF8" stroke-width="0.08">31</text>
<text x="371.8" y="392.3" font-size="8.6" fill="#000000" text-anchor="end" stroke="#FFFFB0" stroke-width="0.08">VREFP</text>
<text x="390.4" y="412" font-size="11" fill="#000000" stroke="#FFFCF8" stroke-width="0.08">30</text>
<text x="371.8" y="417.3" font-size="8.6" fill="#000000" text-anchor="end" stroke="#FFFFB0" stroke-width="0.08">VREFN</text>
<text x="390.4" y="424" font-size="11" fill="#000000" stroke="#FFFCF8" stroke-width="0.08">32</text>
<text x="371.8" y="429.3" font-size="8.6" fill="#000000" text-anchor="end" stroke="#FFFFB0" stroke-width="0.08">AINCOM</text>
<text x="390.4" y="436" font-size="11" fill="#000000" stroke="#FFFCF8" stroke-width="0.08">41</text>
<text x="371.8" y="441.3" font-size="8.6" fill="#000000" text-anchor="end" stroke="#FFFFB0" stroke-width="0.08">ADCINN</text>
<text x="390.4" y="448" font-size="11" fill="#000000" stroke="#FFFCF8" stroke-width="0.08">42</text>
<text x="371.8" y="453.3" font-size="8.6" fill="#000000" text-anchor="end" stroke="#FFFFB0" stroke-width="0.08">ADCINP</text>
<text x="390.4" y="460" font-size="11" fill="#000000" stroke="#FFFCF8" stroke-width="0.08">43</text>
<text x="371.8" y="465.3" font-size="8.6" fill="#000000" text-anchor="end" stroke="#FFFFB0" stroke-width="0.08">MUXOUTN</text>
<text x="390.4" y="473" font-size="11" fill="#000000" stroke="#FFFCF8" stroke-width="0.08">44</text>
<text x="371.8" y="478.3" font-size="8.6" fill="#000000" text-anchor="end" stroke="#FFFFB0" stroke-width="0.08">MUXOUTP</text>
<text x="390.4" y="485" font-size="11" fill="#000000" stroke="#FFFCF8" stroke-width="0.08">48</text>
<text x="371.8" y="490.3" font-size="8.6" fill="#000000" text-anchor="end" stroke="#FFFFB0" stroke-width="0.08">AIN4</text>
<text x="390.4" y="497" font-size="11" fill="#000000" stroke="#FFFCF8" stroke-width="0.08">47</text>
<text x="371.8" y="502.3" font-size="8.6" fill="#000000" text-anchor="end" stroke="#FFFFB0" stroke-width="0.08">AIN5</text>
<text x="390.4" y="509" font-size="11" fill="#000000" stroke="#FFFCF8" stroke-width="0.08">46</text>
<text x="371.8" y="514.3" font-size="8.6" fill="#000000" text-anchor="end" stroke="#FFFFB0" stroke-width="0.08">AIN6</text>
<text x="390.4" y="521" font-size="11" fill="#000000" stroke="#FFFCF8" stroke-width="0.08">45</text>
<text x="371.8" y="526.3" font-size="8.6" fill="#000000" text-anchor="end" stroke="#FFFFB0" stroke-width="0.08">AIN7</text>
<text x="390.4" y="534" font-size="11" fill="#000000" stroke="#FFFCF8" stroke-width="0.08">40</text>
<text x="371.8" y="539.3" font-size="8.6" fill="#000000" text-anchor="end" stroke="#FFFFB0" stroke-width="0.08">AIN8</text>
<text x="390.4" y="546" font-size="11" fill="#000000" stroke="#FFFCF8" stroke-width="0.08">39</text>
<text x="371.8" y="551.3" font-size="8.6" fill="#000000" text-anchor="end" stroke="#FFFFB0" stroke-width="0.08">AIN9</text>
<text x="390.4" y="558" font-size="11" fill="#E8175D" stroke="#FFFCF8" stroke-width="0.08">49</text>
<text x="371.8" y="563.3" font-size="8.6" fill="#000000" text-anchor="end" stroke="#FFFFB0" stroke-width="0.08">GND</text>
<text x="161.4" y="387.2" font-size="11" fill="#800000" stroke="#FFFCF8" stroke-width="0.08">AD-SCLK2-IOS</text>
<text x="161.4" y="399.2" font-size="11" fill="#800000" stroke="#FFFCF8" stroke-width="0.08">AD-DIN2-IOS</text>
<text x="161.4" y="412.2" font-size="11" fill="#800000" stroke="#FFFCF8" stroke-width="0.08">AD-DOUT2-IOS</text>
<text x="161.4" y="424.2" font-size="11" fill="#800000" stroke="#FFFCF8" stroke-width="0.08">AD-DRDY2-IOS</text>
<text x="161.4" y="436.2" font-size="11" fill="#800000" stroke="#FFFCF8" stroke-width="0.08">AD-START2-IOS</text>
<text x="161.4" y="448.2" font-size="11" fill="#800000" stroke="#FFFCF8" stroke-width="0.08">AD-CS2-IOS</text>
<text x="210.4" y="484.8" font-size="11" fill="#00F000" stroke="#FFFCF8" stroke-width="0.08">AIN2-1</text>
<text x="210.4" y="496.8" font-size="11" fill="#00F000" stroke="#FFFCF8" stroke-width="0.08">AIN2-2</text>
<text x="210.4" y="508.8" font-size="11" fill="#00F000" stroke="#FFFCF8" stroke-width="0.08">AIN2-3</text>
<text x="210.4" y="520.8" font-size="11" fill="#00F000" stroke="#FFFCF8" stroke-width="0.08">AIN2-4</text>
<text x="93.1" y="545.9" font-size="11" fill="#FF00FF" stroke="#FFFCF8" stroke-width="0.08">EX-Sensor</text>
<text x="159.9" y="540.6" font-size="11" fill="#000080" stroke="#FFFCF8" stroke-width="0.08">R710</text>
<text x="160" y="564.9" font-size="11" fill="#000080" stroke="#FFFCF8" stroke-width="0.08">2k</text>
<text x="227" y="626" font-size="11" fill="#800000" text-anchor="middle" stroke="#FFFCF8" stroke-width="0.08">AGND</text>
<text x="240.7" y="574.9" font-size="11" fill="#000080" stroke="#FFFCF8" stroke-width="0.08">C716</text>
<text x="240.7" y="587.5" font-size="11" fill="#000080" stroke="#FFFCF8" stroke-width="0.08">0.1u</text>
<text x="77" y="605.7" font-size="11" fill="#800000" text-anchor="middle" stroke="#FFFCF8" stroke-width="0.08">AGND</text>
<text x="23.9" y="460.6" font-size="11" fill="#FF0000" stroke="#FFFCF8" stroke-width="0.08">AD1258+3.3V_2_A</text>
<text x="23.3" y="547.9" font-size="11" fill="#800000" text-anchor="middle" stroke="#FFFCF8" stroke-width="0.08">DGND2</text>
<text x="36.4" y="489.6" font-size="11" fill="#000080" stroke="#FFFCF8" stroke-width="0.08">C712</text>
<text x="36.4" y="501.7" font-size="11" fill="#000080" stroke="#FFFCF8" stroke-width="0.08">22u</text>
<text x="96.8" y="489.6" font-size="11" fill="#000080" stroke="#FFFCF8" stroke-width="0.08">C713</text>
<text x="96.8" y="501.7" font-size="11" fill="#000080" stroke="#FFFCF8" stroke-width="0.08">0.1u</text>
<text x="156.3" y="517.9" font-size="11" fill="#800000" text-anchor="middle" stroke="#FFFCF8" stroke-width="0.08">DGND2</text>
<text x="636.1" y="386.9" font-size="11" fill="#FF00FF" stroke="#FFFCF8" stroke-width="0.08">AD-Ref</text>
<text x="532" y="492" font-size="11" fill="#800000" text-anchor="middle" stroke="#FFFCF8" stroke-width="0.08">AGND</text>
<text x="454.1" y="435.7" font-size="11" fill="#800000" stroke="#FFFCF8" stroke-width="0.08">ADCINN2</text>
<text x="454.1" y="447.7" font-size="11" fill="#800000" stroke="#FFFCF8" stroke-width="0.08">ADCINP2</text>
<text x="454.1" y="459.7" font-size="11" fill="#800000" stroke="#FFFCF8" stroke-width="0.08">MUXOUTN2</text>
<text x="454.1" y="472.7" font-size="11" fill="#800000" stroke="#FFFCF8" stroke-width="0.08">MUXOUTP2</text>
<text x="452.3" y="622.3" font-size="11" fill="#800000" text-anchor="middle" stroke="#FFFCF8" stroke-width="0.08">AGND</text>
<text x="635.4" y="477.4" font-size="11" fill="#800000" text-anchor="middle" stroke="#FFFCF8" stroke-width="0.08">AGND</text>
<text x="648.8" y="416.3" font-size="11" fill="#000080" stroke="#FFFCF8" stroke-width="0.08">C706</text>
<text x="648.8" y="428.8" font-size="11" fill="#000080" stroke="#FFFCF8" stroke-width="0.08">0.1u</text>
<text x="828.4" y="407.7" font-size="11" fill="#800000" stroke="#FFFCF8" stroke-width="0.08">MUXOUTP2</text>
<text x="781.9" y="425.9" font-size="11" fill="#00F000" stroke="#FFFCF8" stroke-width="0.08">VSS-2.5V_2_A</text>
<text x="913.4" y="383.6" font-size="11" fill="#E8175D" text-anchor="end" stroke="#FFFCF8" stroke-width="0.08">1</text>
<text x="932.1" y="389.3" font-size="8.6" fill="#000000" stroke="#EBEB00" stroke-width="0.08">VoutA</text>
<text x="913.4" y="395.6" font-size="11" fill="#E8175D" text-anchor="end" stroke="#FFFCF8" stroke-width="0.08">2</text>
<text x="932.1" y="401.3" font-size="8.6" fill="#000000" stroke="#EBEB00" stroke-width="0.08">-INA</text>
<text x="913.4" y="407.6" font-size="11" fill="#E8175D" text-anchor="end" stroke="#FFFCF8" stroke-width="0.08">3</text>
<text x="932.1" y="413.3" font-size="8.6" fill="#000000" stroke="#EBEB00" stroke-width="0.08">+INA</text>
<text x="913.4" y="419.6" font-size="11" fill="#E8175D" text-anchor="end" stroke="#FFFCF8" stroke-width="0.08">4</text>
<text x="932.1" y="425.3" font-size="8.6" fill="#000000" stroke="#EBEB00" stroke-width="0.08">V-</text>
<text x="1006.4" y="383.6" font-size="11" fill="#E8175D" stroke="#FFFCF8" stroke-width="0.08">8</text>
<text x="988.3" y="389.3" font-size="8.6" fill="#000000" text-anchor="end" stroke="#EBEB00" stroke-width="0.08">V+</text>
<text x="1006.4" y="395.6" font-size="11" fill="#E8175D" stroke="#FFFCF8" stroke-width="0.08">7</text>
<text x="988.3" y="401.3" font-size="8.6" fill="#000000" text-anchor="end" stroke="#EBEB00" stroke-width="0.08">VoutB</text>
<text x="1006.4" y="407.6" font-size="11" fill="#E8175D" stroke="#FFFCF8" stroke-width="0.08">6</text>
<text x="988.3" y="413.3" font-size="8.6" fill="#000000" text-anchor="end" stroke="#EBEB00" stroke-width="0.08">-INB</text>
<text x="1006.4" y="419.6" font-size="11" fill="#E8175D" stroke="#FFFCF8" stroke-width="0.08">5</text>
<text x="988.3" y="425.3" font-size="8.6" fill="#000000" text-anchor="end" stroke="#EBEB00" stroke-width="0.08">+INB</text>
<text x="923.6" y="371.5" font-size="11" fill="#000080" stroke="#FFFCF8" stroke-width="0.08">U702</text>
<text x="923.6" y="444.1" font-size="11" fill="#000080" stroke="#FFFCF8" stroke-width="0.08">opa2365</text>
<text x="946.2" y="455.3" font-size="11" fill="#000080" stroke="#FFFCF8" stroke-width="0.08">C711</text>
<text x="946.6" y="491.7" font-size="11" fill="#000080" stroke="#FFFCF8" stroke-width="0.08">2.2n</text>
<text x="795.6" y="376.2" font-size="11" fill="#000080" stroke="#FFFCF8" stroke-width="0.08">R708</text>
<text x="795.6" y="403.1" font-size="11" fill="#000080" stroke="#FFFCF8" stroke-width="0.08">47r</text>
<text x="1103.7" y="344.6" font-size="11" fill="#FF0000" stroke="#FFFCF8" stroke-width="0.08">VCC+2.5V_2_A</text>
<text x="1034.7" y="420" font-size="11" fill="#800000" stroke="#FFFCF8" stroke-width="0.08">MUXOUTN2</text>
<text x="1115.1" y="388.4" font-size="11" fill="#000080" stroke="#FFFCF8" stroke-width="0.08">R709</text>
<text x="1115.1" y="415.3" font-size="11" fill="#000080" stroke="#FFFCF8" stroke-width="0.08">47r</text>
<text transform="translate(912.1,485.1) rotate(90)" font-size="11" fill="#800000">ADCINP2</text>
<text transform="translate(1012.1,487.9) rotate(90)" font-size="11" fill="#800000">ADCINN2</text>
<rect x="969" y="0" width="56" height="1" fill="#000080"/>
<rect x="1025" y="0" width="12" height="1" fill="#000000"/>
<rect x="1037" y="0" width="5" height="1" fill="#0000FF"/>
<polyline points="1042,0.5 1044,-2 1046,4 1048.4,-3 1050.8,4 1053.2,-3 1055.6,4 1057.5,-1 1058,0.5" fill="none" stroke="#0000FF" stroke-width="0.8"/>
<rect x="1057" y="0" width="4" height="1" fill="#0000FF"/>
<rect x="1061" y="0" width="12" height="1" fill="#000000"/>
<rect x="1074" y="0" width="112" height="1" fill="#000080"/>
<circle cx="1135.05" cy="0.65" r="2.6" fill="#000080"/>
<rect x="1135" y="0" width="1" height="25" fill="#0000FF"/>
<rect x="1126" y="25" width="22" height="1" fill="#0000FF"/>
<rect x="1126" y="32" width="22" height="1" fill="#0000FF"/>
<rect x="1135" y="32" width="1" height="18" fill="#0000FF"/>
<rect x="1135" y="50" width="1" height="11" fill="#000080"/>
<rect x="1185" y="0" width="1" height="50" fill="#0000FF"/>
<rect x="1185" y="51" width="1" height="10" fill="#000080"/>
<rect x="1176" y="25" width="10" height="1" fill="#0000FF"/>
<rect x="1176" y="32" width="10" height="1" fill="#0000FF"/>
<rect x="1135" y="61" width="51" height="1" fill="#000080"/>
<circle cx="1186.05" cy="0.65" r="2.6" fill="#000080"/>
<circle cx="1186.05" cy="61.65" r="2.6" fill="#000080"/>
<rect x="1185" y="62" width="1" height="11" fill="#800000"/>
<rect x="1173" y="73" width="24" height="1" fill="#800000"/>
<rect x="1176" y="77" width="17" height="1" fill="#800000"/>
<rect x="1180" y="81" width="10" height="1" fill="#800000"/>
<rect x="1184" y="84" width="2" height="1" fill="#800000"/>
<rect x="410.5" y="30.5" width="96" height="181" fill="none" stroke="#800000" stroke-width="1"/>
<rect x="374" y="42" width="36" height="1" fill="#000000"/>
<rect x="374" y="54" width="36" height="1" fill="#000000"/>
<rect x="374" y="66" width="36" height="1" fill="#000000"/>
<rect x="374" y="78" width="36" height="1" fill="#000000"/>
<rect x="374" y="91" width="36" height="1" fill="#000000"/>
<rect x="374" y="115" width="36" height="1" fill="#000000"/>
<rect x="374" y="139" width="36" height="1" fill="#000000"/>
<rect x="374" y="151" width="36" height="1" fill="#000000"/>
<rect x="374" y="164" width="36" height="1" fill="#000000"/>
<rect x="374" y="176" width="36" height="1" fill="#000000"/>
<rect x="374" y="188" width="36" height="1" fill="#000000"/>
<rect x="419" y="171" width="26" height="1" fill="#000000"/>
<rect x="507" y="54" width="37" height="1" fill="#000000"/>
<rect x="507" y="66" width="37" height="1" fill="#000000"/>
<rect x="507" y="78" width="37" height="1" fill="#000000"/>
<rect x="507" y="91" width="37" height="1" fill="#000000"/>
<rect x="507" y="103" width="37" height="1" fill="#000000"/>
<rect x="507" y="115" width="37" height="1" fill="#000000"/>
<rect x="507" y="127" width="37" height="1" fill="#000000"/>
<rect x="507" y="139" width="37" height="1" fill="#000000"/>
<rect x="507" y="164" width="37" height="1" fill="#000000"/>
<rect x="507" y="188" width="37" height="1" fill="#000000"/>
<rect x="473" y="159" width="27" height="1" fill="#000000"/>
<rect x="321" y="30" width="24" height="1" fill="#800000"/>
<rect x="324" y="26" width="17" height="1" fill="#800000"/>
<rect x="328" y="22" width="10" height="1" fill="#800000"/>
<rect x="332" y="19" width="2" height="1" fill="#800000"/>
<rect x="333" y="31" width="1" height="11" fill="#800000"/>
<rect x="333" y="42" width="1" height="37" fill="#000080"/>
<rect x="333" y="42" width="41" height="1" fill="#000080"/>
<rect x="333" y="54" width="41" height="1" fill="#000080"/>
<rect x="333" y="66" width="41" height="1" fill="#000080"/>
<rect x="333" y="78" width="41" height="1" fill="#000080"/>
<circle cx="333.05" cy="41.65" r="2.6" fill="#000080"/>
<circle cx="333.05" cy="53.65" r="2.6" fill="#000080"/>
<circle cx="333.05" cy="65.65" r="2.6" fill="#000080"/>
<rect x="83" y="91" width="291" height="1" fill="#000080"/>
<rect x="83" y="115" width="291" height="1" fill="#000080"/>
<rect x="143" y="91" width="1" height="48" fill="#000080"/>
<rect x="143" y="139" width="1" height="17" fill="#0000FF"/>
<rect x="133" y="156" width="22" height="1" fill="#0000FF"/>
<rect x="133" y="164" width="22" height="1" fill="#0000FF"/>
<rect x="143" y="164" width="1" height="16" fill="#0000FF"/>
<rect x="143" y="180" width="1" height="15" fill="#000080"/>
<circle cx="143.05" cy="90.65" r="2.6" fill="#000080"/>
<rect x="204" y="115" width="1" height="19" fill="#000080"/>
<rect x="204" y="134" width="1" height="17" fill="#0000FF"/>
<rect x="194" y="151" width="22" height="1" fill="#0000FF"/>
<rect x="194" y="159" width="22" height="1" fill="#0000FF"/>
<rect x="204" y="159" width="1" height="17" fill="#0000FF"/>
<rect x="204" y="176" width="1" height="18" fill="#000080"/>
<circle cx="204.05" cy="114.65" r="2.6" fill="#000080"/>
<rect x="143" y="194" width="62" height="1" fill="#000080"/>
<circle cx="204.05" cy="193.65" r="2.6" fill="#000080"/>
<rect x="204" y="195" width="1" height="11" fill="#800000"/>
<rect x="192" y="206" width="24" height="1" fill="#800000"/>
<rect x="195" y="210" width="17" height="1" fill="#800000"/>
<rect x="199" y="214" width="10" height="1" fill="#800000"/>
<rect x="203" y="217" width="2" height="1" fill="#800000"/>
<rect x="271" y="176" width="12" height="1" fill="#FF0000"/>
<rect x="277" y="176" width="1" height="13" fill="#FF0000"/>
<rect x="278" y="188" width="18" height="1" fill="#000080"/>
<rect x="296" y="188" width="17" height="1" fill="#000000"/>
<rect x="313.5" y="182.5" width="31" height="12" fill="none" stroke="#000080" stroke-width="1"/>
<rect x="345" y="188" width="17" height="1" fill="#000000"/>
<rect x="362" y="188" width="12" height="1" fill="#000080"/>
<circle cx="362.05" cy="187.65" r="2.6" fill="#000080"/>
<rect x="362" y="176" width="1" height="12" fill="#000080"/>
<rect x="362" y="176" width="12" height="1" fill="#000080"/>
<rect x="544" y="54" width="13" height="1" fill="#000080"/>
<rect x="544" y="66" width="13" height="1" fill="#000080"/>
<rect x="544" y="78" width="13" height="1" fill="#000080"/>
<rect x="544" y="91" width="13" height="1" fill="#000080"/>
<rect x="544" y="103" width="13" height="1" fill="#000080"/>
<rect x="544" y="115" width="13" height="1" fill="#000080"/>
<rect x="544" y="127" width="13" height="1" fill="#000080"/>
<rect x="544" y="139" width="13" height="1" fill="#000080"/>
<rect x="556" y="54" width="1" height="86" fill="#000080"/>
<circle cx="556.05" cy="53.65" r="2.6" fill="#000080"/>
<circle cx="556.05" cy="65.65" r="2.6" fill="#000080"/>
<circle cx="556.05" cy="77.65" r="2.6" fill="#000080"/>
<circle cx="556.05" cy="90.65" r="2.6" fill="#000080"/>
<circle cx="556.05" cy="102.65" r="2.6" fill="#000080"/>
<circle cx="556.05" cy="114.65" r="2.6" fill="#000080"/>
<circle cx="556.05" cy="126.65" r="2.6" fill="#000080"/>
<rect x="557" y="54" width="11" height="1" fill="#800000"/>
<polygon points="568.5,42.5 568.5,66.5 580.7,54.5" fill="none" stroke="#800000" stroke-width="1"/>
<rect x="544" y="164" width="61" height="1" fill="#000080"/>
<rect x="544" y="188" width="61" height="1" fill="#000080"/>
<rect x="605" y="188" width="18" height="1" fill="#000000"/>
<rect x="623.5" y="182.5" width="31" height="12" fill="none" stroke="#000080" stroke-width="1"/>
<rect x="655" y="188" width="17" height="1" fill="#000000"/>
<rect x="672" y="188" width="76" height="1" fill="#000080"/>
<rect x="271.5" y="377.5" width="109" height="194" fill="none" stroke="#800000" stroke-width="1"/>
<rect x="235" y="389" width="36" height="1" fill="#000000"/>
<rect x="235" y="401" width="36" height="1" fill="#000000"/>
<rect x="235" y="414" width="36" height="1" fill="#000000"/>
<rect x="235" y="426" width="36" height="1" fill="#000000"/>
<rect x="235" y="438" width="36" height="1" fill="#000000"/>
<rect x="235" y="450" width="36" height="1" fill="#000000"/>
<rect x="235" y="462" width="36" height="1" fill="#000000"/>
<rect x="235" y="475" width="36" height="1" fill="#000000"/>
<rect x="235" y="487" width="36" height="1" fill="#000000"/>
<rect x="235" y="499" width="36" height="1" fill="#000000"/>
<rect x="235" y="511" width="36" height="1" fill="#000000"/>
<rect x="235" y="523" width="36" height="1" fill="#000000"/>
<rect x="235" y="536" width="36" height="1" fill="#000000"/>
<rect x="235" y="548" width="36" height="1" fill="#000000"/>
<rect x="280" y="421" width="25" height="1" fill="#000000"/>
<rect x="280" y="445" width="11" height="1" fill="#000000"/>
<rect x="381" y="389" width="36" height="1" fill="#000000"/>
<rect x="381" y="414" width="36" height="1" fill="#000000"/>
<rect x="381" y="426" width="36" height="1" fill="#000000"/>
<rect x="381" y="438" width="36" height="1" fill="#000000"/>
<rect x="381" y="450" width="36" height="1" fill="#000000"/>
<rect x="381" y="462" width="36" height="1" fill="#000000"/>
<rect x="381" y="475" width="36" height="1" fill="#000000"/>
<rect x="381" y="487" width="36" height="1" fill="#000000"/>
<rect x="381" y="499" width="36" height="1" fill="#000000"/>
<rect x="381" y="511" width="36" height="1" fill="#000000"/>
<rect x="381" y="523" width="36" height="1" fill="#000000"/>
<rect x="381" y="536" width="36" height="1" fill="#000000"/>
<rect x="381" y="548" width="36" height="1" fill="#000000"/>
<rect x="381" y="560" width="36" height="1" fill="#E8175D"/>
<rect x="162" y="389" width="73" height="1" fill="#000080"/>
<rect x="162" y="401" width="73" height="1" fill="#000080"/>
<rect x="162" y="414" width="73" height="1" fill="#000080"/>
<rect x="162" y="426" width="73" height="1" fill="#000080"/>
<rect x="162" y="438" width="73" height="1" fill="#000080"/>
<rect x="162" y="450" width="73" height="1" fill="#000080"/>
<rect x="182" y="414" width="31" height="1" fill="#800000"/>
<rect x="182" y="438" width="13" height="1" fill="#800000"/>
<rect x="23" y="462" width="212" height="1" fill="#000080"/>
<rect x="156" y="475" width="79" height="1" fill="#000080"/>
<rect x="210" y="487" width="25" height="1" fill="#000080"/>
<rect x="210" y="499" width="25" height="1" fill="#000080"/>
<rect x="210" y="511" width="25" height="1" fill="#000080"/>
<rect x="210" y="523" width="25" height="1" fill="#000080"/>
<rect x="77" y="536" width="158" height="1" fill="#000080"/>
<rect x="93" y="548" width="51" height="1" fill="#000080"/>
<rect x="144" y="548" width="17" height="1" fill="#000000"/>
<rect x="161.5" y="542.5" width="31" height="12" fill="none" stroke="#000080" stroke-width="1"/>
<rect x="193" y="548" width="17" height="1" fill="#000000"/>
<rect x="210" y="548" width="25" height="1" fill="#000080"/>
<circle cx="227.05" cy="547.65" r="2.6" fill="#000080"/>
<rect x="227" y="549" width="1" height="17" fill="#0000FF"/>
<rect x="217" y="566" width="22" height="1" fill="#0000FF"/>
<rect x="217" y="573" width="22" height="1" fill="#0000FF"/>
<rect x="227" y="573" width="1" height="18" fill="#0000FF"/>
<rect x="227" y="591" width="1" height="13" fill="#800000"/>
<rect x="215" y="604" width="24" height="1" fill="#800000"/>
<rect x="218" y="608" width="17" height="1" fill="#800000"/>
<rect x="222" y="611" width="10" height="1" fill="#800000"/>
<rect x="226" y="615" width="2" height="1" fill="#800000"/>
<rect x="77" y="536" width="1" height="35" fill="#000080"/>
<rect x="77" y="571" width="1" height="12" fill="#800000"/>
<rect x="65" y="583" width="24" height="1" fill="#800000"/>
<rect x="68" y="587" width="17" height="1" fill="#800000"/>
<rect x="72" y="590" width="10" height="1" fill="#800000"/>
<rect x="76" y="594" width="2" height="1" fill="#800000"/>
<rect x="23" y="462" width="1" height="19" fill="#0000FF"/>
<rect x="13" y="481" width="22" height="1" fill="#0000FF"/>
<rect x="13" y="488" width="22" height="1" fill="#0000FF"/>
<rect x="23" y="488" width="1" height="18" fill="#0000FF"/>
<rect x="23" y="506" width="1" height="8" fill="#000080"/>
<rect x="83" y="462" width="1" height="19" fill="#0000FF"/>
<rect x="73" y="481" width="22" height="1" fill="#0000FF"/>
<rect x="73" y="488" width="22" height="1" fill="#0000FF"/>
<rect x="83" y="488" width="1" height="18" fill="#0000FF"/>
<rect x="83" y="506" width="1" height="9" fill="#000080"/>
<circle cx="83.05" cy="461.65" r="2.6" fill="#000080"/>
<rect x="23" y="514" width="61" height="1" fill="#000080"/>
<circle cx="23.05" cy="513.65" r="2.6" fill="#000080"/>
<rect x="23" y="515" width="1" height="11" fill="#800000"/>
<polygon points="11.5,526.5 35.5,526.5 23.5,538.5" fill="none" stroke="#800000" stroke-width="1"/>
<rect x="156" y="475" width="1" height="8" fill="#000080"/>
<rect x="156" y="483" width="1" height="12" fill="#800000"/>
<polygon points="144.5,495.5 168.5,495.5 156.5,507.5" fill="none" stroke="#800000" stroke-width="1"/>
<rect x="417" y="389" width="235" height="1" fill="#000080"/>
<circle cx="635.05" cy="388.65" r="2.6" fill="#000080"/>
<rect x="417" y="414" width="116" height="1" fill="#000080"/>
<rect x="417" y="426" width="116" height="1" fill="#000080"/>
<rect x="532" y="414" width="1" height="44" fill="#000080"/>
<rect x="532" y="458" width="1" height="12" fill="#800000"/>
<circle cx="532.05" cy="425.65" r="2.6" fill="#000080"/>
<rect x="520" y="470" width="24" height="1" fill="#800000"/>
<rect x="523" y="474" width="17" height="1" fill="#800000"/>
<rect x="527" y="477" width="10" height="1" fill="#800000"/>
<rect x="531" y="481" width="2" height="1" fill="#800000"/>
<rect x="417" y="438" width="61" height="1" fill="#000080"/>
<rect x="417" y="450" width="61" height="1" fill="#000080"/>
<rect x="417" y="462" width="61" height="1" fill="#000080"/>
<rect x="417" y="475" width="61" height="1" fill="#000080"/>
<rect x="417" y="487" width="38" height="1" fill="#000080"/>
<rect x="454" y="487" width="1" height="37" fill="#000080"/>
<rect x="417" y="499" width="38" height="1" fill="#000080"/>
<circle cx="454.05" cy="498.65" r="2.6" fill="#000080"/>
<rect x="417" y="511" width="38" height="1" fill="#000080"/>
<circle cx="454.05" cy="510.65" r="2.6" fill="#000080"/>
<rect x="417" y="523" width="36" height="1" fill="#000080"/>
<circle cx="453.05" cy="522.65" r="2.6" fill="#000080"/>
<rect x="417" y="536" width="36" height="1" fill="#000080"/>
<circle cx="453.05" cy="535.65" r="2.6" fill="#000080"/>
<rect x="417" y="548" width="36" height="1" fill="#000080"/>
<circle cx="453.05" cy="547.65" r="2.6" fill="#000080"/>
<rect x="417" y="560" width="36" height="1" fill="#000080"/>
<circle cx="453.05" cy="559.65" r="2.6" fill="#000080"/>
<rect x="452" y="523" width="3" height="1" fill="#000080"/>
<rect x="452" y="523" width="1" height="65" fill="#000080"/>
<rect x="452" y="588" width="1" height="12" fill="#800000"/>
<rect x="440" y="600" width="24" height="1" fill="#800000"/>
<rect x="443" y="604" width="17" height="1" fill="#800000"/>
<rect x="447" y="608" width="10" height="1" fill="#800000"/>
<rect x="451" y="611" width="2" height="1" fill="#800000"/>
<rect x="635" y="390" width="1" height="18" fill="#0000FF"/>
<rect x="626" y="408" width="22" height="1" fill="#0000FF"/>
<rect x="626" y="415" width="22" height="1" fill="#0000FF"/>
<rect x="635" y="415" width="1" height="17" fill="#0000FF"/>
<rect x="635" y="432" width="1" height="12" fill="#000080"/>
<rect x="635" y="444" width="1" height="11" fill="#800000"/>
<rect x="623" y="455" width="24" height="1" fill="#800000"/>
<rect x="626" y="459" width="17" height="1" fill="#800000"/>
<rect x="630" y="462" width="10" height="1" fill="#800000"/>
<rect x="634" y="466" width="2" height="1" fill="#800000"/>
<rect x="761" y="386" width="1" height="86" fill="#000080"/>
<rect x="761" y="386" width="18" height="1" fill="#000080"/>
<rect x="779" y="386" width="17" height="1" fill="#000000"/>
<rect x="796.5" y="380.5" width="31" height="12" fill="none" stroke="#000080" stroke-width="1"/>
<rect x="828" y="386" width="17" height="1" fill="#000000"/>
<rect x="845" y="386" width="54" height="1" fill="#000080"/>
<circle cx="845.05" cy="385.65" r="2.6" fill="#000080"/>
<rect x="845" y="386" width="1" height="13" fill="#000080"/>
<rect x="845" y="398" width="55" height="1" fill="#000080"/>
<rect x="825" y="410" width="75" height="1" fill="#000080"/>
<rect x="854" y="422" width="13" height="1" fill="#00F000"/>
<rect x="867" y="422" width="33" height="1" fill="#000080"/>
<rect x="854" y="416" width="1" height="13" fill="#00F000"/>
<rect x="900" y="386" width="23" height="1" fill="#E8175D"/>
<rect x="996" y="386" width="25" height="1" fill="#E8175D"/>
<rect x="900" y="398" width="23" height="1" fill="#E8175D"/>
<rect x="996" y="398" width="25" height="1" fill="#E8175D"/>
<rect x="900" y="410" width="23" height="1" fill="#E8175D"/>
<rect x="996" y="410" width="25" height="1" fill="#E8175D"/>
<rect x="900" y="422" width="23" height="1" fill="#E8175D"/>
<rect x="996" y="422" width="25" height="1" fill="#E8175D"/>
<rect x="923.5" y="373.5" width="72" height="60" fill="none" stroke="#000080" stroke-width="1"/>
<rect x="1021" y="386" width="120" height="1" fill="#000080"/>
<rect x="1140" y="360" width="1" height="26" fill="#000080"/>
<rect x="1140" y="347" width="1" height="13" fill="#FF0000"/>
<rect x="1134" y="347" width="12" height="1" fill="#FF0000"/>
<rect x="1021" y="398" width="77" height="1" fill="#000080"/>
<rect x="1099" y="398" width="17" height="1" fill="#000000"/>
<rect x="1116.5" y="392.5" width="30" height="12" fill="none" stroke="#000080" stroke-width="1"/>
<rect x="1147" y="398" width="18" height="1" fill="#000000"/>
<rect x="1165" y="398" width="13" height="1" fill="#000080"/>
<rect x="1177" y="398" width="1" height="74" fill="#000080"/>
<circle cx="1055.05" cy="397.65" r="2.6" fill="#000080"/>
<rect x="1055" y="398" width="1" height="13" fill="#000080"/>
<rect x="1021" y="410" width="35" height="1" fill="#000080"/>
<rect x="1021" y="422" width="66" height="1" fill="#000080"/>
<rect x="761" y="471" width="166" height="1" fill="#000080"/>
<rect x="930" y="471" width="18" height="1" fill="#0000FF"/>
<rect x="948" y="460" width="1" height="22" fill="#0000FF"/>
<rect x="955" y="460" width="1" height="22" fill="#0000FF"/>
<rect x="955" y="471" width="17" height="1" fill="#0000FF"/>
<rect x="974" y="471" width="204" height="1" fill="#000080"/>
<circle cx="910.05" cy="470.65" r="2.6" fill="#000080"/>
<circle cx="1010.05" cy="470.65" r="2.6" fill="#000080"/>
<rect x="910" y="471" width="1" height="55" fill="#000080"/>
<rect x="1010" y="471" width="1" height="55" fill="#000080"/>
<g stroke-linecap="round" stroke-linejoin="round"><path d="M94.2,550.4 L100.6,552.2 L100.4,558.5 L99.4,566 L98.9,577 Q98.6,580.3 96,580 Q93.4,579.6 93.6,575.5 L94.0,560 Z" fill="#000"/><path d="M96.5,552.3 L104.5,553.5 L112,555.6 L119.6,558.5" stroke="#000" stroke-width="4.4" fill="none"/><path d="M94.2,550.3 L100,550.6 L100,555 Z" fill="#000"/><path d="M119,558.3 L123.5,559.2 L127,560.6" stroke="#000" stroke-width="1.3" fill="none"/><path d="M97.6,554.5 L144.2,619.8" stroke="#000" stroke-width="3.6" stroke-linecap="butt" fill="none"/><path d="M104.4,556.9 L110.5,564.5 L117,570 L124.8,575.7 L137,583.8 L151.2,592 L161.4,598 L168.5,601.1 L172.6,605.2 L175.8,605.4" stroke="#000" stroke-width="1" fill="none"/><path d="M102,562.5 L100.5,567 L98.9,572.6" stroke="#000" stroke-width="0.8" fill="none"/></g>
<text transform="translate(127.2,630.4) rotate(-90)" font-size="23.5" font-weight="300" fill="#000" text-anchor="middle" dy="8.4" style="font-family:'Liberation Serif','Noto Serif CJK SC',serif">信</text>
<text transform="translate(157.8,630.2) rotate(-90)" font-size="23.5" font-weight="300" fill="#000" text-anchor="middle" dy="8.4" style="font-family:'Liberation Serif','Noto Serif CJK SC',serif">号</text>
<text transform="translate(189,630.2) rotate(-90)" font-size="23.5" font-weight="300" fill="#000" text-anchor="middle" dy="8.4" style="font-family:'Liberation Serif','Noto Serif CJK SC',serif">输</text>
<text transform="translate(219,630.8) rotate(-90)" font-size="23.5" font-weight="300" fill="#000" text-anchor="middle" dy="8.4" style="font-family:'Liberation Serif','Noto Serif CJK SC',serif">入</text>
<rect x="114" y="617.5" width="1" height="1" fill="#FF0000"/>
</g>
</svg>
</body></html>
